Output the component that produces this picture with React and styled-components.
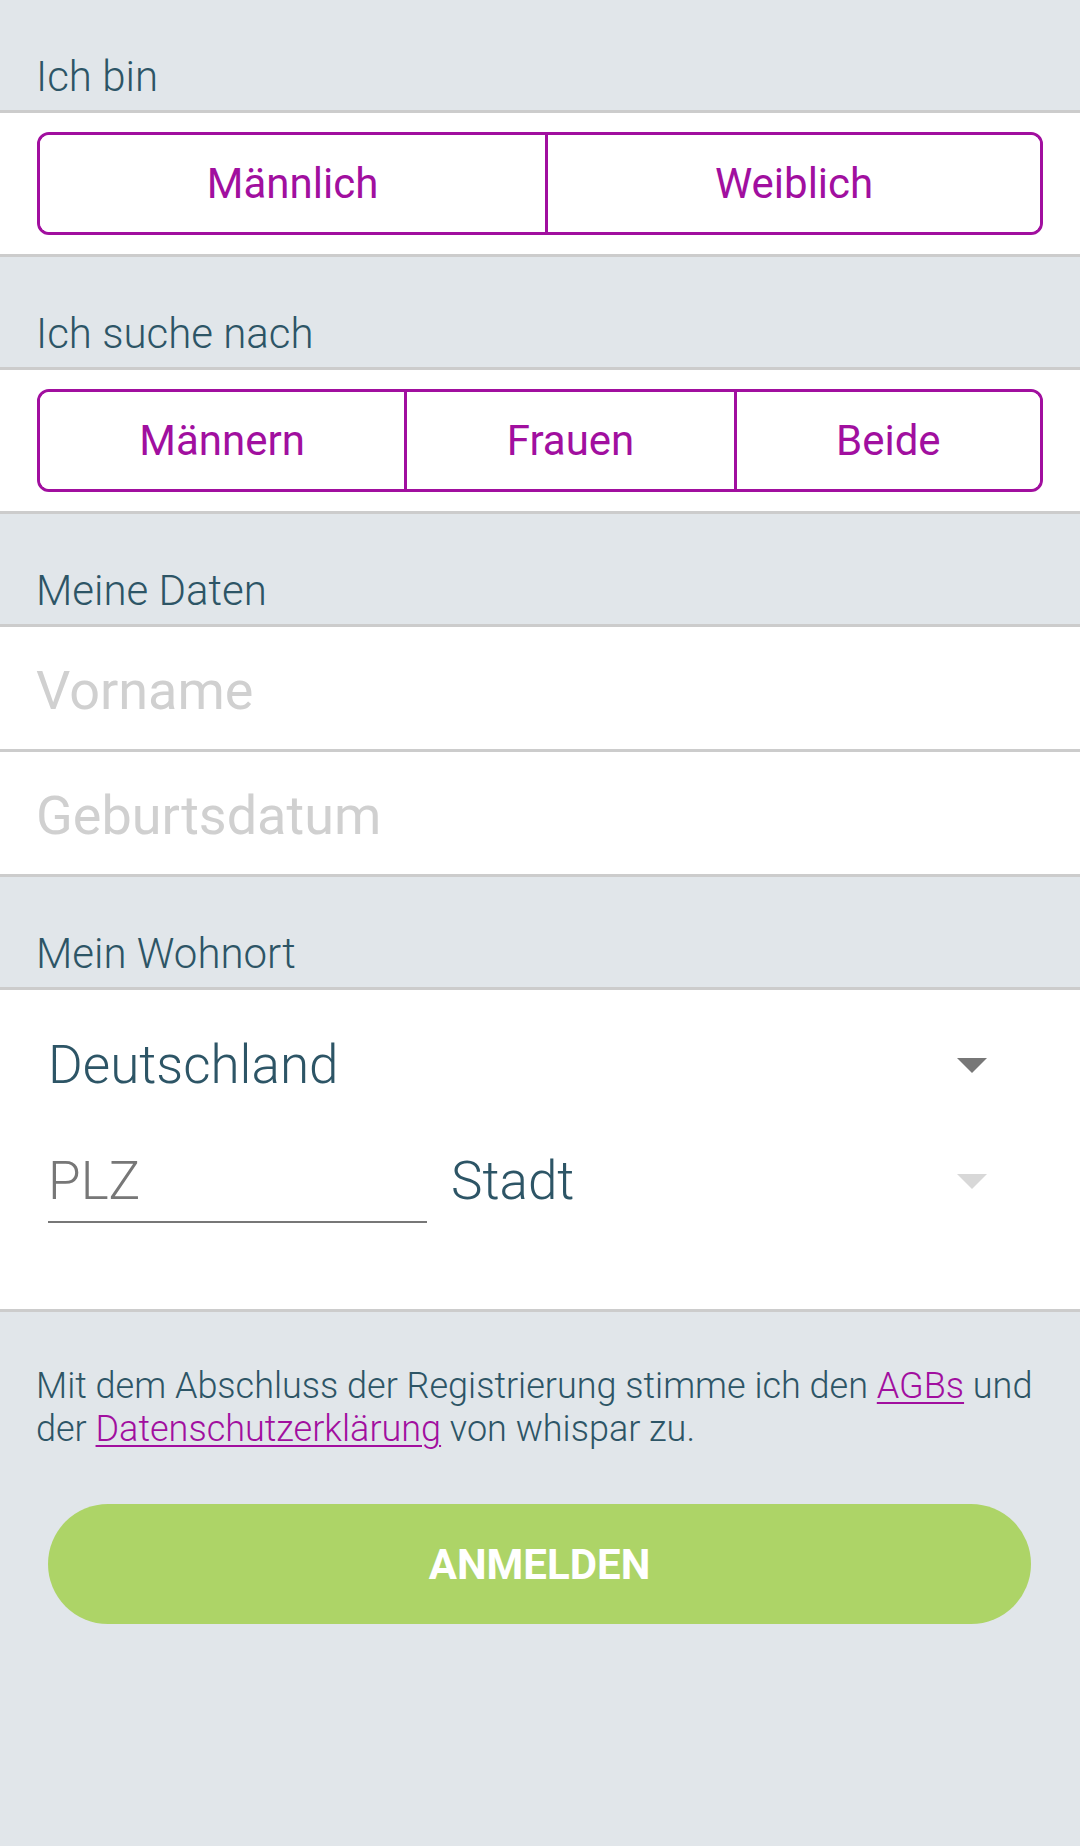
import React from 'react';
import styled, { createGlobalStyle } from 'styled-components';

const GlobalStyle = createGlobalStyle`
    body {
        margin: 0;
        background: #e1e6ea;
        font-family: Roboto, "Liberation Sans", sans-serif;
    }
`;

const Page = styled.div`
    width: 1080px;
    min-height: 1846px;
    background: #e1e6ea;
`;

const SectionHeader = styled.div`
    display: flex;
    align-items: flex-end;
    padding: 0 36px 12px;
    box-sizing: border-box;
    border-bottom: 3px solid #cccccc;
    height: 113px;
    font-size: 42px;
    font-weight: 300;
    line-height: 42px;
    color: #2d5566;
`;

const WhiteBlock = styled.div`
    background: #ffffff;
    border-bottom: 3px solid #cccccc;
`;

const ToggleWrap = styled(WhiteBlock)`
    padding: 19px 37px;
`;

const ToggleGroup = styled.div`
    display: flex;
    height: 103px;
    box-sizing: border-box;
    border: 3px solid #a10f9f;
    border-radius: 12px;
    overflow: hidden;
`;

const ToggleButton = styled.button`
    flex: 1 1 auto;
    padding: 0;
    margin: 0;
    border: none;
    border-left: ${p => (p.$first ? 'none' : '3px solid #a10f9f')};
    background: #ffffff;
    color: #a10f9f;
    font-family: Roboto, "Liberation Sans", sans-serif;
    font-size: 42px;
    font-weight: 400;
    cursor: pointer;
`;

const Field = styled(WhiteBlock)`
    height: 118px;
    display: flex;
    align-items: center;
    padding: 4px 36px 0;
    font-size: 54px;
    color: #d0d0d0;
`;

const Location = styled(WhiteBlock)`
    padding: 35px 93px 86px 48px;
    display: flex;
    flex-direction: column;
    gap: 36px;
`;

const SelectRow = styled.div`
    display: flex;
    align-items: center;
    justify-content: space-between;
    height: 80px;
    flex: ${p => (p.$grow ? 1 : 'none')};
    font-size: 53px;
    font-weight: 300;
    line-height: 80px;
    color: #2d5566;
`;

const Row = styled.div`
    display: flex;
    align-items: flex-start;
`;

const PlzField = styled.div`
    width: 379px;
    height: 80px;
    border-bottom: 2px solid #777777;
    font-size: 53px;
    font-weight: 300;
    line-height: 80px;
    color: #777777;
    margin-right: 24px;
`;

const Terms = styled.p`
    margin: 0;
    padding: 53px 36px 0;
    font-size: 36px;
    font-weight: 300;
    line-height: 43px;
    color: #2d5566;
`;

const TermsLink = styled.a`
    color: #a10f9f;
    text-decoration: underline;
    text-decoration-thickness: 2px;
    text-underline-offset: 4px;
`;

const SubmitButton = styled.button`
    display: block;
    margin: 53px 49px 0 48px;
    width: 983px;
    height: 120px;
    border: none;
    border-radius: 60px;
    background: #add467;
    color: #ffffff;
    font-family: Roboto, "Liberation Sans", sans-serif;
    font-size: 42px;
    font-weight: 700;
    cursor: pointer;
`;

function Caret({ color }) {
    return (
        <svg width="30" height="15" viewBox="0 0 30 15">
            <polygon points="0,0 30,0 15,15" fill={color} />
        </svg>
    );
}

function Toggle({ options }) {
    return (
        <ToggleWrap>
            <ToggleGroup>
                {options.map((o, i) => (
                    <ToggleButton key={o} $first={i === 0}>{o}</ToggleButton>
                ))}
            </ToggleGroup>
        </ToggleWrap>
    );
}

export default function App() {
    return (
        <Page>
            <GlobalStyle />
            <SectionHeader>Ich bin</SectionHeader>
            <Toggle options={['Männlich', 'Weiblich']} />
            <SectionHeader>Ich suche nach</SectionHeader>
            <Toggle options={['Männern', 'Frauen', 'Beide']} />
            <SectionHeader>Meine Daten</SectionHeader>
            <Field>Vorname</Field>
            <Field>Geburtsdatum</Field>
            <SectionHeader>Mein Wohnort</SectionHeader>
            <Location>
                <SelectRow>
                    <span>Deutschland</span>
                    <Caret color="#777777" />
                </SelectRow>
                <Row>
                    <PlzField>PLZ</PlzField>
                    <SelectRow $grow>
                        <span>Stadt</span>
                        <Caret color="#d8d8d8" />
                    </SelectRow>
                </Row>
            </Location>
            <Terms>
                Mit dem Abschluss der Registrierung stimme ich den <TermsLink>AGBs</TermsLink> und
                der <TermsLink>Datenschutzerklärung</TermsLink> von whispar zu.
            </Terms>
            <SubmitButton>ANMELDEN</SubmitButton>
        </Page>
    );
}
